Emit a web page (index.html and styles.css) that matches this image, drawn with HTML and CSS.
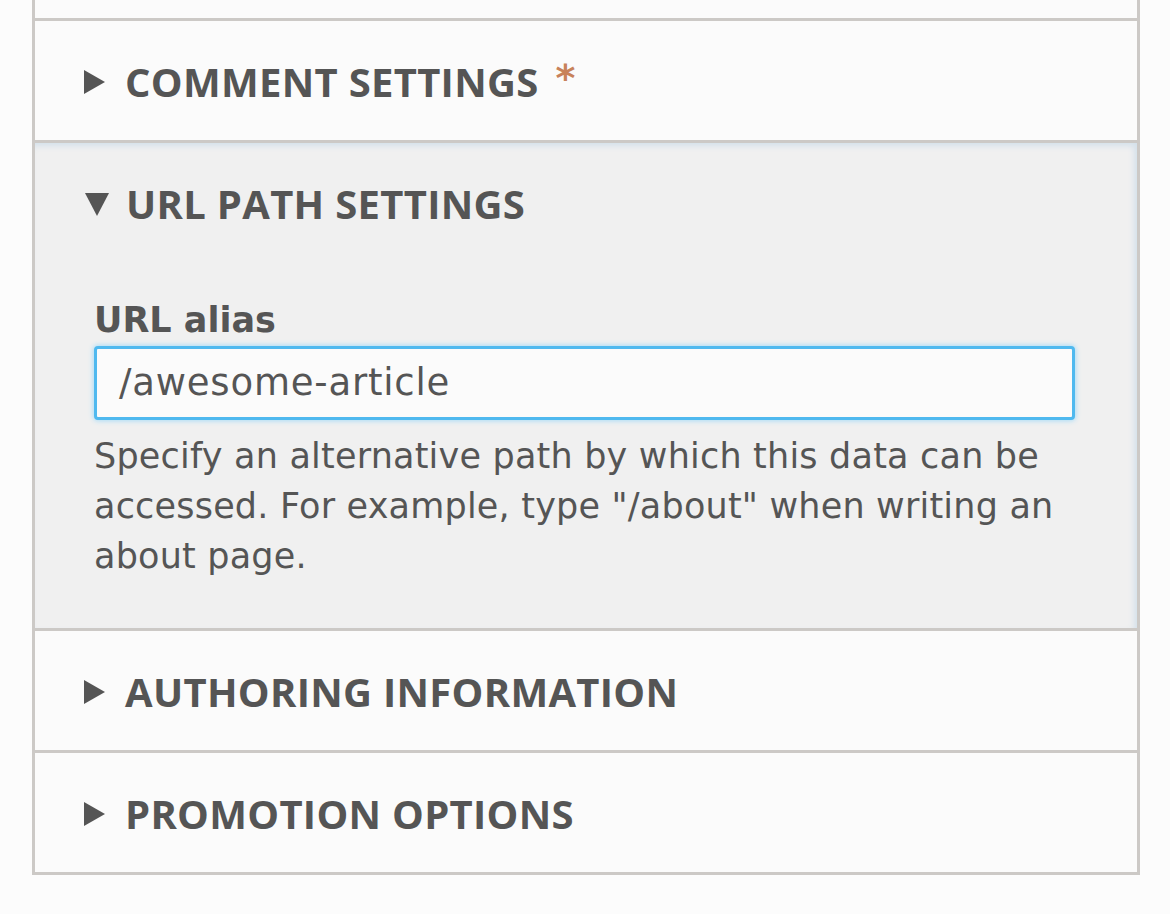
FILE: index.html
```html
<!DOCTYPE html>
<html>
<head>
<meta charset="utf-8">
<link rel="stylesheet" href="styles.css">
</head>
<body>
<div class="panel">
  <div class="section section-top"></div>
  <div class="section">
    <div class="summary">
      <span class="arrow arrow-right"></span>
      <span class="title">COMMENT SETTINGS</span>
      <span class="required">*</span>
    </div>
  </div>
  <div class="section section-open">
    <div class="summary">
      <span class="arrow arrow-down"></span>
      <span class="title">URL PATH SETTINGS</span>
    </div>
    <div class="content">
      <label class="label" for="alias">URL alias</label>
      <div class="input">/awesome-article</div>
      <p class="desc">Specify an alternative path by which this data can be accessed. For example, type "/about" when writing an about page.</p>
    </div>
  </div>
  <div class="section">
    <div class="summary">
      <span class="arrow arrow-right"></span>
      <span class="title">AUTHORING INFORMATION</span>
    </div>
  </div>
  <div class="section">
    <div class="summary">
      <span class="arrow arrow-right"></span>
      <span class="title">PROMOTION OPTIONS</span>
    </div>
  </div>
</div>
</body>
</html>
```

FILE: styles.css
```css
html, body {
  margin: 0;
  padding: 0;
  background: #fcfcfc;
}
body {
  font-family: "DejaVu Sans", "Open Sans", sans-serif;
  color: #555555;
}
.panel {
  margin-left: 32px;
  width: 1102px;
  border-left: 3px solid #ccc9c6;
  border-right: 3px solid #ccc9c6;
  border-bottom: 3px solid #ccc9c6;
  margin-top: -3px;
}
.section {
  border-top: 3px solid #ccc9c6;
  background: #fbfbfb;
}
.section-top {
  height: 18px;
}
.summary {
  height: 119px;
  display: flex;
  align-items: center;
  padding-left: 49px;
  padding-top: 2px;
  box-sizing: border-box;
}
.arrow {
  width: 0;
  height: 0;
  margin-right: 20px;
  flex: none;
}
.arrow-right {
  border-top: 12px solid transparent;
  border-bottom: 12px solid transparent;
  border-left: 21px solid #555555;
}
.arrow-down {
  border-left: 12px solid transparent;
  border-right: 12px solid transparent;
  border-top: 23px solid #555555;
  margin-left: 1px;
  margin-right: 17px;
  margin-top: 2px;
}
.title {
  font-family: "Open Sans", "DejaVu Sans", sans-serif;
  font-weight: 700;
  font-size: 40px;
  letter-spacing: 0.3px;
  color: #555555;
}
.required {
  color: #c8825a;
  font-weight: 700;
  font-size: 38px;
  margin-left: 17px;
  margin-top: -8px;
}
.section-open {
  background: #f0f0f0;
  box-shadow: inset 0 7px 6px -4px #d4e0ea, inset -7px 0 6px -4px #d4e0ea;
  height: 488px;
  box-sizing: border-box;
}
.content {
  padding: 36px 62px 0 59px;
}
.label {
  display: block;
  font-weight: 700;
  font-size: 35px;
  line-height: 44px;
  margin-bottom: 4px;
  color: #555555;
}
.input {
  height: 74px;
  box-sizing: border-box;
  border: 3px solid #4fb9ef;
  border-radius: 4px;
  background: #fbfbfb;
  box-shadow: 0 0 5px 1px #a9dcf7;
  font-size: 37px;
  letter-spacing: 0.8px;
  line-height: 68px;
  padding-left: 22px;
  color: #555555;
}
.desc {
  margin: 11px 0 0 0;
  font-size: 35px;
  letter-spacing: 0.2px;
  line-height: 50px;
  color: #555555;
}
```
